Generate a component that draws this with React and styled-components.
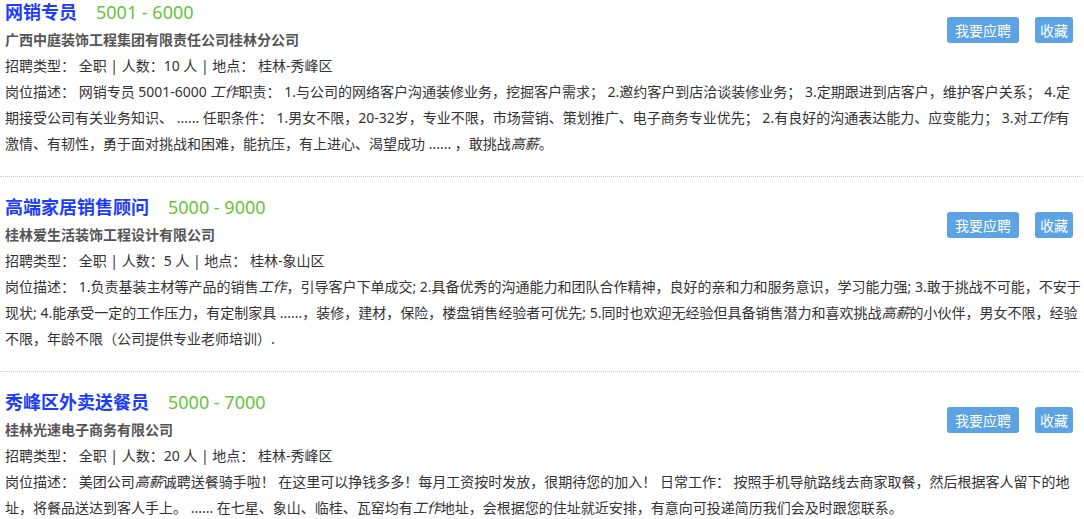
import styled, { createGlobalStyle } from "styled-components";

const GlobalStyle = createGlobalStyle`
  body {
    margin: 0;
    background: #ffffff;
    font-family: "Noto Sans", "Noto Sans CJK SC", sans-serif;
    color: #333333;
  }
`;

const List = styled.ul`
  list-style: none;
  margin: 0;
  padding: 0;
  width: 1082px;
`;

const Item = styled.li`
  padding: 0 0 19px 5px;
  border-bottom: 1px dotted #c8c8c8;
  & + & {
    padding-top: 18px;
  }
  &:last-child {
    border-bottom: none;
  }
`;

const Head = styled.div`
  display: flex;
  justify-content: space-between;
  align-items: flex-start;
`;

const Info = styled.div`
  display: flex;
  flex-direction: column;
`;

const TitleRow = styled.div`
  display: flex;
  align-items: baseline;
  height: 26px;
  line-height: 24px;
`;

const Title = styled.a`
  font-size: 18px;
  font-weight: 700;
  color: #1c3cff;
  text-decoration: none;
  margin-right: 19px;
`;

const Salary = styled.span`
  font-size: 18px;
  color: #66c33a;
`;

const Company = styled.div`
  font-size: 14px;
  font-weight: 700;
  color: #555555;
  line-height: 26px;
  margin-top: 1px;
`;

const Meta = styled.div`
  font-size: 14px;
  line-height: 26px;
`;

const Actions = styled.div`
  display: flex;
  gap: 16px;
  margin-top: 17px;
  padding-right: 9px;
`;

const Button = styled.button`
  height: 26px;
  padding: 0 ${(p) => (p.$wide ? 8 : 5)}px;
  border: none;
  border-radius: 3px;
  background: #5ba3e2;
  color: #ffffff;
  font-family: "Noto Sans CJK SC", sans-serif;
  font-size: 14px;
  line-height: 26px;
  cursor: pointer;
`;

const Desc = styled.p`
  margin: 0;
  font-size: 14px;
  line-height: 26px;
  color: #333333;
  em {
    font-style: italic;
  }
`;

const jobs = [
  {
    title: "网销专员",
    salary: "5001 - 6000",
    company: "广西中庭装饰工程集团有限责任公司桂林分公司",
    count: "10",
    area: "桂林-秀峰区",
    desc: (
      <>
        网销专员 5001-6000 <em>工作</em>职责： 1.与公司的网络客户沟通装修业务，挖掘客户需求； 2.邀约客户到店洽谈装修业务； 3.定期跟进到店客户，维护客户关系； 4.定期接受公司有关业务知识、 ...... 任职条件： 1.男女不限，20-32岁，专业不限，市场营销、策划推广、电子商务专业优先； 2.有良好的沟通表达能力、应变能力； 3.对<em>工作</em>有激情、有韧性，勇于面对挑战和困难，能抗压，有上进心、渴望成功 ...... ，敢挑战<em>高薪</em>。
      </>
    ),
  },
  {
    title: "高端家居销售顾问",
    salary: "5000 - 9000",
    company: "桂林爱生活装饰工程设计有限公司",
    count: "5",
    area: "桂林-象山区",
    desc: (
      <>
        1.负责基装主材等产品的销售<em>工作</em>，引导客户下单成交; 2.具备优秀的沟通能力和团队合作精神，良好的亲和力和服务意识，学习能力强; 3.敢于挑战不可能，不安于现状; 4.能承受一定的工作压力，有定制家具 ......，装修，建材，保险，楼盘销售经验者可优先; 5.同时也欢迎无经验但具备销售潜力和喜欢挑战<em>高薪</em>的小伙伴，男女不限，经验不限，年龄不限（公司提供专业老师培训）.
      </>
    ),
  },
  {
    title: "秀峰区外卖送餐员",
    salary: "5000 - 7000",
    company: "桂林光速电子商务有限公司",
    count: "20",
    area: "桂林-秀峰区",
    desc: (
      <>
        美团公司<em>高薪</em>诚聘送餐骑手啦！ 在这里可以挣钱多多！每月工资按时发放，很期待您的加入！ 日常工作： 按照手机导航路线去商家取餐，然后根据客人留下的地址，将餐品送达到客人手上。 ...... 在七星、象山、临桂、瓦窑均有<em>工作</em>地址，会根据您的住址就近安排，有意向可投递简历我们会及时跟您联系。
      </>
    ),
  },
];

export default function App() {
  return (
    <>
      <GlobalStyle />
      <List>
        {jobs.map((job) => (
          <Item key={job.title}>
            <Head>
              <Info>
                <TitleRow>
                  <Title href="#">{job.title}</Title>
                  <Salary>{job.salary}</Salary>
                </TitleRow>
                <Company>{job.company}</Company>
                <Meta>
                  招聘类型： 全职 | 人数：{job.count} 人 | 地点： {job.area}
                </Meta>
              </Info>
              <Actions>
                <Button $wide>我要应聘</Button>
                <Button>收藏</Button>
              </Actions>
            </Head>
            <Desc>岗位描述： {job.desc}</Desc>
          </Item>
        ))}
      </List>
    </>
  );
}
